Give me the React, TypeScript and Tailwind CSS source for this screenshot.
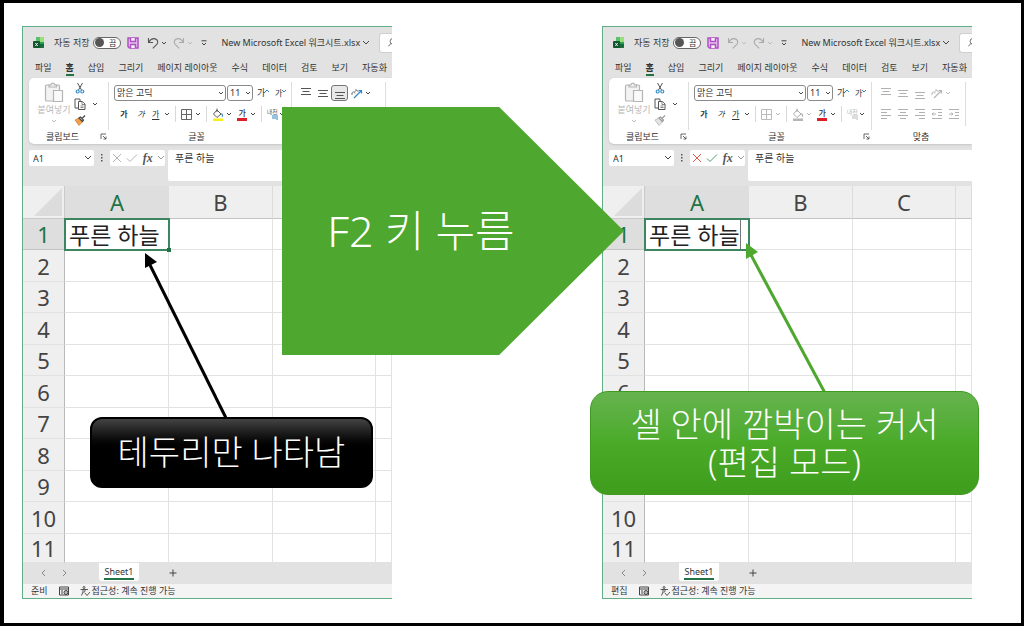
import type { ReactNode } from "react";
import clsx from "clsx";

const tabs = ["파일", "홈", "삽입", "그리기", "페이지 레이아웃", "수식", "데이터", "검토", "보기", "자동화"];
const columns = ["A", "B", "C", "D"];
const rows = [1, 2, 3, 4, 5, 6, 7, 8, 9, 10, 11];

function Chevron({ className = "text-[#444]" }: { className?: string }) {
  return (
    <svg viewBox="0 0 6 6" className={clsx("h-[6px] w-[6px] shrink-0", className)} fill="none" stroke="currentColor">
      <path d="M1 2l2 2 2-2" />
    </svg>
  );
}

function ExcelLogo() {
  return (
    <svg viewBox="0 0 12 12" className="h-3 w-3 shrink-0">
      <rect x="3" y="0" width="8" height="11" rx="1" fill="#2f9e55" />
      <path d="M3 0h4v5H3z" fill="#5cc06f" />
      <path d="M7 0h3a1 1 0 011 1v4H7z" fill="#9be07c" />
      <path d="M3 7h8v3a1 1 0 01-1 1H4a1 1 0 01-1-1z" fill="#176b3a" />
      <rect x="0" y="4" width="7" height="7" rx="1" fill="#11572f" />
      <path d="M2.300 6l2.400 3M4.700 6L2.300 9" stroke="#fff" strokeWidth="0.900" />
    </svg>
  );
}

function SaveIcon() {
  return (
    <svg viewBox="0 0 12 12" className="h-3 w-3 shrink-0" fill="none" stroke="#b04fc4" strokeWidth="1.500">
      <path d="M1 1h10v10H2.500L1 9.500z" fill="#e6c3ee" />
      <path d="M3.500 1v3.500h5V1M3.500 11V7.500h5V11" fill="#f3eef5" />
    </svg>
  );
}

function UndoIcon({ flipped }: { flipped?: boolean }) {
  return (
    <svg
      viewBox="0 0 12 12"
      className={clsx("h-3 w-3 shrink-0", flipped && "-scale-x-100")}
      fill="none"
      stroke="currentColor"
      strokeWidth="1.100"
    >
      <path d="M1.500 1v4.500H6M1.700 5.300C3.500 2.300 6 1.200 8.300 1.900c2.500.8 3.200 3.600 1.500 5.500L5.800 11.300" />
    </svg>
  );
}

function PasteIcon() {
  return (
    <svg viewBox="0 0 20 22" className="h-[22px] w-5" fill="#f3f3f3" stroke="#b5b5b5" strokeWidth="1.200">
      <rect x="1.500" y="3" width="14" height="16" rx="1" />
      <path d="M5 5V3h2c0-2.500 3.500-2.500 3.500 0h2v2z" />
      <path d="M9.500 8.500h9v11h-9z" fill="#fafafa" />
    </svg>
  );
}

function ScissorsIcon() {
  return (
    <svg viewBox="0 0 10 12" className="h-3 w-[10px]" fill="none">
      <path d="M2.500 1l4 7M7.500 1l-4 7" stroke="#555" />
      <circle cx="2.700" cy="9.500" r="1.500" stroke="#3a8fc9" strokeWidth="1.200" />
      <circle cx="7.300" cy="9.500" r="1.500" stroke="#3a8fc9" strokeWidth="1.200" />
    </svg>
  );
}

function CopyIcon() {
  return (
    <svg viewBox="0 0 12 12" className="h-3 w-3" fill="#fff" stroke="#555">
      <path d="M1 1h5v9H1z" />
      <path d="M4.500 3.500h4l2.500 2.500v5.500H4.500z" />
      <path d="M8 3.500V6.500h3M6.500 8h3M6.500 9.500h3" strokeWidth="0.700" />
    </svg>
  );
}

function BrushIcon({ muted }: { muted: boolean }) {
  return (
    <svg viewBox="0 0 12 12" className="h-3 w-3">
      <path d="M1 6l4-2 3.500 3.500L5 11.500z" fill={muted ? "#e4e4e4" : "#f0a04b"} stroke={muted ? "#aaa" : "#d97b27"} strokeWidth="0.700" />
      <path d="M5 4l1.500-1L9.500 6 8.500 7.500zM8 4.500L11 1.500" fill="none" stroke={muted ? "#999" : "#444"} strokeWidth="1.200" />
    </svg>
  );
}

function Launcher() {
  return (
    <svg viewBox="0 0 7 7" className="h-[7px] w-[7px]" fill="none" stroke="#555" strokeWidth="0.900">
      <path d="M1 6V1h5M3 3l3 3M6 3.500V6H3.500" />
    </svg>
  );
}

function Lines({ d, boxed, muted }: { d: string; boxed?: boolean; muted: boolean }) {
  return (
    <button
      type="button"
      aria-label="맞춤"
      className={clsx(
        "flex h-4 w-[17px] items-center justify-center rounded-[3px] border",
        boxed ? "border-[#777] bg-[#e8e8e8]" : "border-transparent"
      )}
    >
      <svg viewBox="0 0 10 12" className="h-3 w-[10px] shrink-0" stroke={muted ? "#b0b0b0" : "#555"} fill="none">
        <path d={d} />
      </svg>
    </button>
  );
}

function Separator() {
  return <span className="h-4 w-px shrink-0 bg-[#d8d8d8]" />;
}

function Group({ label, className, launcher, children }: { label: string; className: string; launcher?: boolean; children: ReactNode }) {
  return (
    <div className={clsx("flex h-full shrink-0 flex-col", className)}>
      <div className="h-[51px]">{children}</div>
      <div className={clsx("relative flex h-[15px] items-center justify-center text-[#333]", launcher && "pr-3")}>
        {label}
        {launcher && (
          <button type="button" aria-label={`${label} 설정`} className="absolute right-[1px] top-1">
            <Launcher />
          </button>
        )}
      </div>
    </div>
  );
}

function TitleBar({ editing }: { editing: boolean }) {
  return (
    <div className="flex h-[31px] items-center pl-[10px]">
      <ExcelLogo />
      <span className="ml-[9px] shrink-0">자동 저장</span>
      <button
        type="button"
        role="switch"
        aria-checked="false"
        aria-label="자동 저장"
        className="ml-1 flex h-3 w-7 shrink-0 items-center justify-between rounded-full border border-[#666] bg-white pl-[1px] pr-1 text-[8px]"
      >
        <span className="h-[9px] w-[9px] rounded-full bg-[#555]" />
        끔
      </button>
      <button type="button" aria-label="저장" className="ml-[6px]"><SaveIcon /></button>
      <button type="button" aria-label="실행 취소" className={clsx("ml-2 flex items-center gap-[2px]", editing ? "text-[#aaa]" : "text-[#555]")}>
        <UndoIcon />
        <Chevron className={editing ? "text-[#bbb]" : "text-[#444]"} />
      </button>
      <button type="button" aria-label="다시 실행" className="ml-[6px] flex items-center gap-[2px] text-[#aaa]">
        <UndoIcon flipped />
        <Chevron className="text-[#bbb]" />
      </button>
      <svg viewBox="0 0 6 6" className="ml-2 h-[6px] w-[6px] shrink-0" fill="none" stroke="#444">
        <path d="M0.500 0.800h5M1 3l2 2 2-2" />
      </svg>
      <span className="ml-[14px] shrink-0 whitespace-nowrap">New Microsoft Excel 워크시트.xlsx</span>
      <svg viewBox="0 0 8 6" className="ml-[2px] h-[6px] w-2 shrink-0" fill="none" stroke="#444">
        <path d="M1 1l3 3 3-3" />
      </svg>
      <button type="button" aria-label="검색" className="ml-auto flex h-5 w-[13px] shrink-0 items-center overflow-hidden rounded-l-[3px] border border-r-0 border-[#d0d0d0] bg-white pl-2">
        <svg viewBox="0 0 12 12" className="h-[10px] w-[10px] shrink-0" fill="none" stroke="#555">
          <circle cx="6" cy="4" r="3.500" />
          <path d="M3.500 6.500L0.500 10" />
        </svg>
      </button>
    </div>
  );
}

function Ribbon({ editing }: { editing: boolean }) {
  const muted = editing;
  const mutedChevron = muted ? "text-[#bbb]" : "text-[#444]";
  return (
    <div className="ml-[6px] flex h-[66px] items-start overflow-hidden rounded-l-[5px] bg-white shadow-sm">
      <Group label="클립보드" className="w-[79px]" launcher>
        <div className="flex pl-[7px] pt-1">
          <button type="button" className="flex w-9 flex-col items-center text-[#b8b8b8]">
            <PasteIcon />
            <span className="whitespace-nowrap leading-3">붙여넣기</span>
            <Chevron className="mt-[2px] text-[#bbb]" />
          </button>
          <div className="ml-[2px] flex flex-col gap-1">
            <button type="button" aria-label="잘라내기" className="flex w-3 justify-center"><ScissorsIcon /></button>
            <button type="button" aria-label="복사" className="flex items-center gap-[6px]">
              <CopyIcon />
              <Chevron />
            </button>
            <button type="button" aria-label="서식 복사" className="w-3"><BrushIcon muted={muted} /></button>
          </div>
        </div>
      </Group>
      <span className="mt-1 h-12 w-px shrink-0 bg-[#dedede]" />
      <Group label="글꼴" className="w-[182px] pl-[5px]" launcher>
        <div className="flex items-center pt-[7px]">
          <label className="relative flex items-center">
            <select aria-label="글꼴 이름" className="h-4 w-28 appearance-none rounded-[3px] border border-[#8a8a8a] bg-white pl-[2px] leading-3">
              <option>맑은 고딕</option>
            </select>
            <span className="pointer-events-none absolute right-[2px]"><Chevron /></span>
          </label>
          <label className="relative ml-[1px] flex items-center">
            <select aria-label="글꼴 크기" className="h-4 w-[26px] appearance-none rounded-[3px] border border-[#8a8a8a] bg-white pl-[2px] leading-3">
              <option>11</option>
            </select>
            <span className="pointer-events-none absolute right-[2px]"><Chevron /></span>
          </label>
          <button type="button" aria-label="글꼴 크기 크게" className="ml-1 flex w-[14px] items-start leading-3">
            가
            <svg viewBox="0 0 4 4" className="mt-[2px] h-1 w-1" fill="none" stroke="#2f86c6"><path d="M0 3l2-2 2 2" /></svg>
          </button>
          <button type="button" aria-label="글꼴 크기 작게" className="ml-1 flex w-[14px] items-start text-[8px] leading-3">
            가
            <svg viewBox="0 0 4 4" className="mt-[2px] h-1 w-1" fill="none" stroke="#2f86c6"><path d="M0 1l2 2 2-2" /></svg>
          </button>
        </div>
        <div className="flex items-center gap-[5px] pl-1 pt-[5px] text-[8px]">
          <button type="button" className="w-3 font-bold">가</button>
          <button type="button" className="w-3 italic">가</button>
          <button type="button" className="flex items-center gap-[5px]"><span className="underline underline-offset-2">가</span><Chevron /></button>
          <Separator />
          <button type="button" aria-label="테두리" className="flex items-center gap-[3px]">
            <svg viewBox="0 0 11 11" className="h-[11px] w-[11px]" fill="none" stroke={muted ? "#bbb" : "#666"}>
              <path d="M0.500 0.500h10v10h-10zM5.500 0.500v10M0.500 5.500h10" />
            </svg>
            <Chevron className={mutedChevron} />
          </button>
          <Separator />
          <button type="button" aria-label="채우기 색" className="flex items-center gap-[2px]">
            <svg viewBox="0 0 12 13" className="h-[13px] w-3" fill="none">
              <path d="M5 2l4 4-4 3.500L1.500 6zM5 4V0.500" stroke={muted ? "#aaa" : "#555"} />
              <path d="M9.500 5.500c1 1.500 1.500 2.500.5 3" stroke={muted ? "#aaa" : "#2f86c6"} strokeWidth="1.300" />
              <path d="M1 10.500h10v2.500H1z" fill={muted ? "#b5b5b5" : "#f7ef1a"} />
            </svg>
            <Chevron className={mutedChevron} />
          </button>
          <button type="button" className="flex items-center gap-[3px]">
            <span className="flex h-[13px] items-center border-b-3 border-[#dc1f26] px-[1px] font-medium">가</span>
            <Chevron />
          </button>
          <Separator />
          <button type="button" aria-label="윗주" className="flex items-center gap-[1px]">
            <span className="relative">
              <span className={clsx("block pb-1 text-[6px] leading-2", muted ? "text-[#bbb]" : "text-[#666]")}>내천</span>
              <svg viewBox="0 0 6 5" className="absolute bottom-0 right-0 h-[5px] w-[6px]" fill="none" stroke={muted ? "#bbb" : "#2f86c6"}>
                <path d="M1 0v4M3 0v4M5 0v5" />
              </svg>
            </span>
            <Chevron />
          </button>
        </div>
      </Group>
      <span className="mt-1 h-12 w-px shrink-0 bg-[#dedede]" />
      <Group label="맞춤" className="w-[93px] pl-[5px]">
        <div className="flex items-center pt-[7px]">
          <Lines muted={muted} d="M0 1.500h10M1.500 4.500h7M0 7.500h10" />
          <Lines muted={muted} d="M0 3.500h10M1.500 6.500h7M0 9.500h10" />
          <Lines muted={muted} boxed={!editing} d="M0 5.500h10M1.500 8.500h7M0 11.500h10" />
          <button type="button" aria-label="방향" className="ml-[3px] flex items-center gap-[2px]">
            <svg viewBox="0 0 12 12" className="h-3 w-3" fill="none">
              <path d="M1 6.500a1.500 1.500 0 013 0M1 6v2M4.500 2l3 3M6 3.500a1.500 1.500 0 00-2 1.500" stroke={muted ? "#b5b5b5" : "#777"} />
              <path d="M3 11L10.500 3.500M7.500 3.500h3v3" stroke={muted ? "#b5b5b5" : "#2f86c6"} strokeWidth="1.200" />
            </svg>
            <Chevron className={mutedChevron} />
          </button>
        </div>
        <div className="flex items-center pt-[5px]">
          <Lines muted={muted} d="M0 1.500h10M0 4.500h6M0 7.500h10M0 10.500h6" />
          <Lines muted={muted} d="M0 1.500h10M2 4.500h6M0 7.500h10M2 10.500h6" />
          <Lines muted={muted} d="M0 1.500h10M4 4.500h6M0 7.500h10M4 10.500h6" />
          <Lines muted={muted} d="M0 1.500h10M0 6h4M1.500 4.500L0 6l1.500 1.500M6 4.500h4M6 7.500h4M0 10.500h10" />
          <Lines muted={muted} d="M0 1.500h10M0 6h4M2.500 4.500L4 6 2.500 7.500M6 4.500h4M6 7.500h4M0 10.500h10" />
        </div>
      </Group>
      <span className="mt-1 h-11 w-px shrink-0 bg-[#dedede]" />
    </div>
  );
}

function FormulaBar({ editing }: { editing: boolean }) {
  return (
    <div className="mb-[5px] mt-[6px] flex h-[31px] items-start pl-[6px]">
      <label className="relative flex items-center">
        <input aria-label="이름 상자" defaultValue="A1" className="h-4 w-[65px] rounded-[2px] bg-white pl-1" />
        <svg viewBox="0 0 8 6" className="absolute right-[2px] h-[6px] w-2" fill="none" stroke="#444">
          <path d="M1 1l3 3 3-3" />
        </svg>
      </label>
      <svg viewBox="0 0 2 8" className="mx-[7px] mt-1 h-2 w-[2px] shrink-0" fill="#555">
        <path d="M0 0h1.500v1.500H0zM0 3h1.500v1.500H0zM0 6h1.500v1.500H0z" />
      </svg>
      <div className="flex h-4 w-[55px] shrink-0 items-center justify-between rounded-[2px] bg-white pl-[2px]">
        <button type="button" aria-label="취소">
          <svg viewBox="0 0 10 10" className="h-[10px] w-[10px]" fill="none" stroke={editing ? "#e2574c" : "#b5b5b5"}>
            <path d="M1 1l8 8M9 1L1 9" />
          </svg>
        </button>
        <button type="button" aria-label="입력">
          <svg viewBox="0 0 12 10" className="h-[10px] w-3" fill="none" stroke={editing ? "#4a9e6b" : "#b5b5b5"}>
            <path d="M1 5.500l3 3L11 1.500" />
          </svg>
        </button>
        <button type="button" className="font-['Liberation_Serif',serif] text-[12px] font-bold italic leading-3 text-[#555]">fx</button>
        <svg viewBox="0 0 8 6" className="h-[6px] w-2" fill="none" stroke="#999">
          <path d="M1 1l3 3 3-3" />
        </svg>
      </div>
      <textarea
        aria-label="수식 입력줄"
        defaultValue="푸른 하늘"
        className="ml-[3px] h-[31px] min-w-0 flex-1 resize-none overflow-hidden rounded-l-[2px] bg-white pl-[7px] pt-[1px] text-[10px] leading-[14px]"
      />
    </div>
  );
}

function Sheet({ editing }: { editing: boolean }) {
  return (
    <table className="w-full table-fixed border-separate border-spacing-0 bg-white text-[22px] leading-7 text-[#444]">
      <colgroup>
        <col className="w-[42px]" />
        <col className="w-[104px]" />
        <col className="w-[104px]" />
        <col className="w-[103px]" />
        <col />
      </colgroup>
      <thead>
        <tr className="h-[33px]">
          <th aria-label="모두 선택" className="border-b border-r border-[#c9c9c9] bg-[#efefef] p-0">
            <svg viewBox="0 0 28 28" className="ml-auto mr-[2px] h-7 w-7" fill="#dcdcdc">
              <path d="M28 0v28H0z" />
            </svg>
          </th>
          {columns.map((column) => (
            <th
              key={column}
              className={clsx(
                "overflow-hidden border-b border-[#c4c4c4] p-0 font-normal",
                column === "A" ? "bg-[#dedede] text-[#217346]" : "border-r border-r-[#dcdcdc] bg-[#efefef]"
              )}
            >
              {column !== "D" && column}
            </th>
          ))}
        </tr>
      </thead>
      <tbody>
        {rows.map((row) => (
          <tr key={row} className="odd:h-[31px] even:h-8 last:h-[29px]!">
            <th
              className={clsx(
                "border-b border-r border-r-[#b9b9b9] p-0 font-normal",
                row === 1 ? "border-b-[#c4c4c4] bg-[#dedede] text-[#217346]" : "border-b-[#e2e2e2] bg-[#efefef]"
              )}
            >
              {row}
            </th>
            {columns.map((column) => (
              <td key={column} className="relative border-b border-r border-[#e2e2e2] p-0">
                {row === 1 && column === "A" && (
                  <div className="absolute -bottom-[2px] -left-[1px] -right-[2px] -top-[1px] z-10 flex items-center border-2 border-[#3b8560] bg-white pl-[3px] text-[23px] text-[#222]">
                    푸른 하늘
                    {editing ? (
                      <span className="h-full w-px bg-[#777]" />
                    ) : (
                      <span className="absolute -bottom-[3px] -right-[3px] h-1 w-1 bg-[#217346]" />
                    )}
                  </div>
                )}
              </td>
            ))}
          </tr>
        ))}
      </tbody>
    </table>
  );
}

function ExcelWindow({ editing = false }: { editing?: boolean }) {
  return (
    <section className="min-w-0 flex-1 overflow-hidden border-y border-l border-[#5fae85] bg-[#e2e2e2] text-[9px] leading-3 text-[#333]">
      <TitleBar editing={editing} />
      <nav className="flex h-5 gap-[14px] whitespace-nowrap pl-3 pt-[3px]">
        {tabs.map((tab) => (
          <a
            key={tab}
            href="#"
            className={clsx("h-[15px] shrink-0 pt-px", tab === "홈" && "border-b-2 border-[#217346] font-bold")}
          >
            {tab}
          </a>
        ))}
      </nav>
      <Ribbon editing={editing} />
      <FormulaBar editing={editing} />
      <Sheet editing={editing} />
      <div className="flex h-[21px] items-start pl-[17px]">
        <button type="button" aria-label="이전 시트" className="mt-[6px] text-[#888]">
          <svg viewBox="0 0 6 8" className="h-2 w-[6px]" fill="none" stroke="currentColor"><path d="M5 1L2 4l3 3" /></svg>
        </button>
        <button type="button" aria-label="다음 시트" className="ml-4 mt-[6px] text-[#888]">
          <svg viewBox="0 0 6 8" className="h-2 w-[6px]" fill="none" stroke="currentColor"><path d="M1 1l3 3-3 3" /></svg>
        </button>
        <button type="button" className="ml-[31px] h-[18px] w-10 rounded-b-[3px] bg-white px-[5px]">
          <span className="flex h-4 items-center justify-center border-b-2 border-[#217346] pt-[2px]">Sheet1</span>
        </button>
        <button type="button" aria-label="새 시트" className="ml-[30px] mt-[6px]">
          <svg viewBox="0 0 8 8" className="h-2 w-2" stroke="#444"><path d="M4 0.500v7M0.500 4h7" /></svg>
        </button>
      </div>
      <footer className="flex h-[14px] items-center bg-[#f4f4f4] pl-2">
        <span>{editing ? "편집" : "준비"}</span>
        <svg viewBox="0 0 10 10" className="ml-[11px] h-[10px] w-[10px]" fill="none" stroke="#444">
          <path d="M0.500 1h9v8h-9zM0.500 3h9M2 5h2M2 7h2" />
          <circle cx="7" cy="6.500" r="2" fill="#bbb" />
        </svg>
        <svg viewBox="0 0 10 10" className="ml-[11px] h-[10px] w-[10px]" fill="none" stroke="#444" strokeWidth="0.900">
          <circle cx="4" cy="1.500" r="1" />
          <path d="M0.500 3.500h7.500M3 3.500v2.500L1.500 9.500M5 3.500v2l-1.500 1M5 7l2 2.500 3-3.500" />
        </svg>
        <span className="ml-[2px]">접근성: 계속 진행 가능</span>
      </footer>
    </section>
  );
}

export default function App() {
  return (
    <main className="relative min-h-screen overflow-hidden border-[3px] border-l-4 border-black bg-white font-['Noto_Sans','Noto_Sans_CJK_KR',sans-serif]">
      <div className="flex gap-[210px] pb-6 pl-[18px] pr-[49px] pt-[23px]">
        <ExcelWindow />
        <ExcelWindow editing />
      </div>

      {/* Connectors from the notes to cell A1 */}
      <svg viewBox="0 0 1016 620" className="pointer-events-none absolute left-0 top-0 z-20 h-[620px] w-[1016px]">
        <path d="M222 415L146 262" stroke="#000" strokeWidth="3" />
        <path d="M141 250l12 9-12 6z" fill="#000" />
        <path d="M821 390L747 252" stroke="#4ea72e" strokeWidth="3" />
        <path d="M742 240l12 9-12 7z" fill="#4ea72e" />
      </svg>

      {/* Step arrow */}
      <div className="absolute left-[278px] top-[104px] z-20 flex h-[248px] w-[342px] items-center justify-center bg-[#4ea72e] pr-16 text-[43px] font-light text-white [clip-path:polygon(0_0,63.5%_0,100%_50%,63.5%_100%,0_100%)]">
        F2 키 누름
      </div>

      <p className="absolute left-[86px] top-[414px] z-20 flex h-[71px] w-[283px] items-center justify-center rounded-xl border-2 border-black bg-linear-to-b from-[#444] via-black via-50% to-black text-[34px] font-light text-white">
        테두리만 나타남
      </p>
      <p className="absolute left-[586px] top-[388px] z-20 flex h-[104px] w-[389px] flex-col items-center justify-center rounded-[18px] border border-[#3f9a22] bg-linear-to-b from-[#66b34e] via-[#4aab28] via-50% to-[#3f9c1c] text-[34px] font-light leading-[38px] text-white">
        <span>셀 안에 깜박이는 커서</span>
        <span>(편집 모드)</span>
      </p>
    </main>
  );
}
